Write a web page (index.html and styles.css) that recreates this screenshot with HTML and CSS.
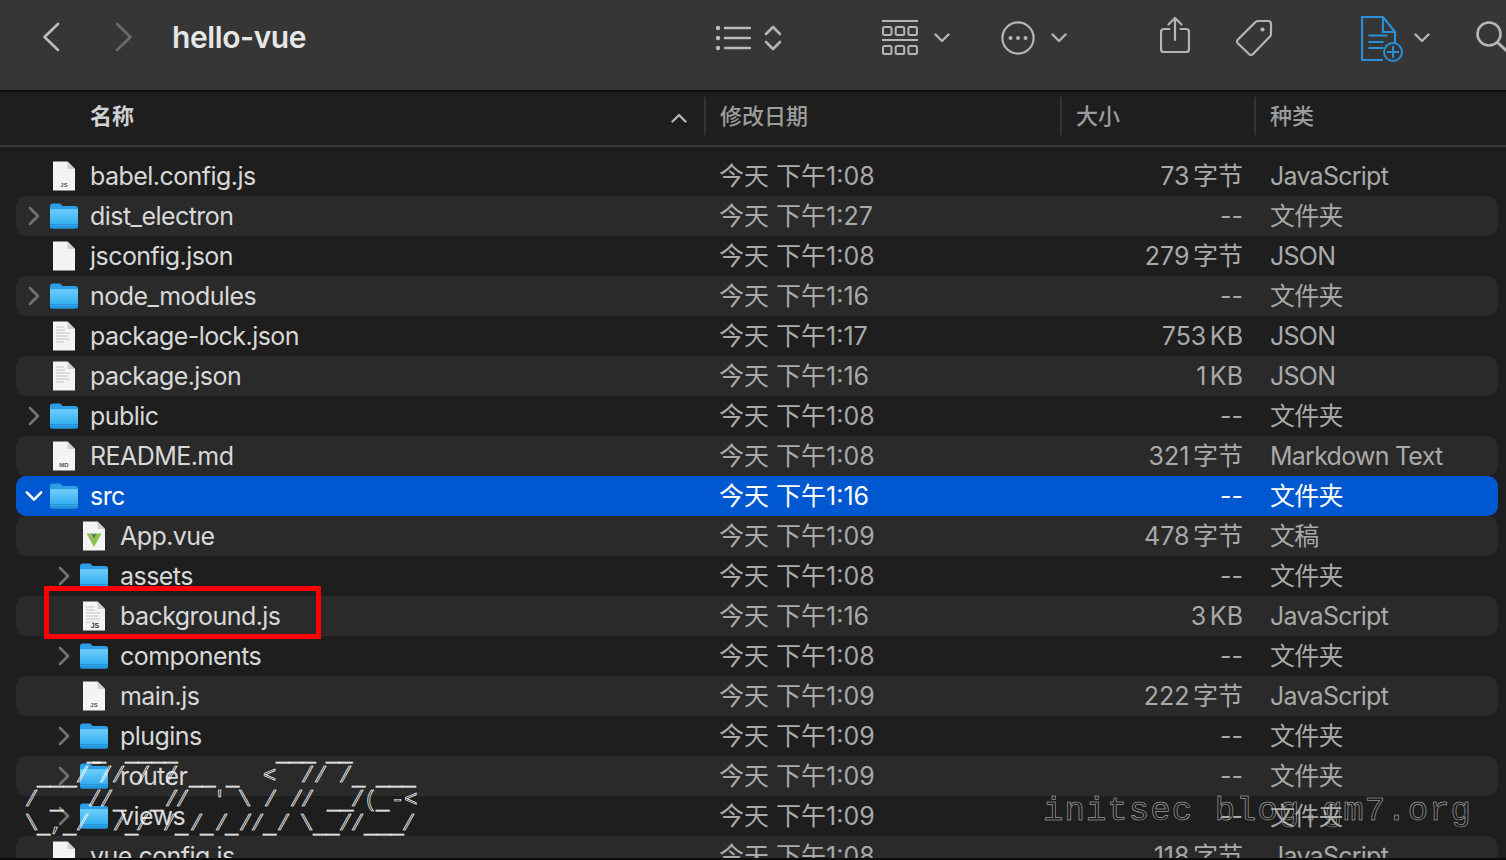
FILE: index.html
```html
<!DOCTYPE html>
<html lang="zh">
<head>
<meta charset="utf-8">
<title>hello-vue</title>
<link rel="stylesheet" href="styles.css">
</head>
<body>
<svg class="defs" width="0" height="0" aria-hidden="true">
  <defs>
    <linearGradient id="fg" x1="0" y1="0" x2="0" y2="1">
      <stop offset="0" stop-color="#6fd0fb"/>
      <stop offset="0.75" stop-color="#35aef0"/>
      <stop offset="1" stop-color="#1f97de"/>
    </linearGradient>
    <symbol id="folder" viewBox="0 0 28 26">
      <path d="M0 3.2C0 1.4 1 .4 2.6.4h6.2c1.3 0 1.9.5 2.7 1.4l1 1.2h13c1.6 0 2.5.9 2.5 2.5V10H0z" fill="#2c9fe6"/>
      <path d="M0 6.2h28V23.6c0 1.4-.9 2.2-2.3 2.2H2.3C.9 25.800 0 25 0 23.600z" fill="url(#fg)"/>
      <path d="M0 21.500h28M0 23.800h28" stroke="#2389cf" stroke-width=".7" fill="none"/>
    </symbol>
    <symbol id="doc" viewBox="0 0 24 30">
      <path d="M1 .5h14.500L23 8v21.500H1z" fill="#f4f4f4"/>
      <path d="M15.500.5V8H23z" fill="#cfcfcf"/>
    </symbol>
    <symbol id="lines" viewBox="0 0 24 30">
      <path d="M4 6h8M4 9h9M4 12h14M4 15h12M4 18h14M4 21h8" stroke="#bdbdbd" stroke-width=".9" fill="none"/>
    </symbol>
    <symbol id="chev-d" viewBox="0 0 16 10">
      <path d="M1.500 1.500 8 8l6.500-6.500" fill="none" stroke="#b5b5b5" stroke-width="2.400" stroke-linecap="round" stroke-linejoin="round"/>
    </symbol>
    <symbol id="disc" viewBox="0 0 12 20">
      <path d="M2 2l8 8-8 8" fill="none" stroke="currentColor" stroke-width="2.600" stroke-linecap="round" stroke-linejoin="round"/>
    </symbol>
  </defs>
</svg>

<main class="window">
  <header class="toolbar">
    <svg class="i-back" width="18" height="30" viewBox="0 0 18 30"><path d="M16 2 2.500 15 16 28" fill="none" stroke="#bdbdbd" stroke-width="2.600" stroke-linecap="round" stroke-linejoin="round"/></svg>
    <svg class="i-fwd" width="18" height="30" viewBox="0 0 18 30"><path d="M2 2l13.500 13L2 28" fill="none" stroke="#6a6a6a" stroke-width="2.600" stroke-linecap="round" stroke-linejoin="round"/></svg>
    <h1 class="title">hello-vue</h1>
    <svg class="i-list" width="36" height="26" viewBox="0 0 36 26"><g fill="#bcbcbc"><circle cx="3" cy="3" r="2.200"/><circle cx="3" cy="13" r="2.200"/><circle cx="3" cy="23" r="2.200"/></g><path d="M10 3h25M10 13h25M10 23h25" stroke="#bcbcbc" stroke-width="2.400" stroke-linecap="round"/></svg>
    <svg class="i-updown" width="18" height="28" viewBox="0 0 18 28"><path d="M2 10l7-7 7 7M2 18l7 7 7-7" fill="none" stroke="#b5b5b5" stroke-width="2.600" stroke-linecap="round" stroke-linejoin="round"/></svg>
    <svg class="i-group" width="36" height="36" viewBox="0 0 36 36"><path d="M0 1h36M0 20h36" stroke="#b5b5b5" stroke-width="2.200"/><g fill="none" stroke="#b5b5b5" stroke-width="2"><rect x="1" y="7" width="8.500" height="8" rx="1.500"/><rect x="13.700" y="7" width="8.500" height="8" rx="1.500"/><rect x="26.400" y="7" width="8.500" height="8" rx="1.500"/><rect x="1" y="26" width="8.500" height="8" rx="1.500"/><rect x="13.700" y="26" width="8.500" height="8" rx="1.500"/><rect x="26.400" y="26" width="8.500" height="8" rx="1.500"/></g></svg>
    <svg class="i-c1" width="16" height="10"><use href="#chev-d"/></svg>
    <svg class="i-more" width="34" height="34" viewBox="0 0 34 34"><circle cx="17" cy="17" r="15.600" fill="none" stroke="#b5b5b5" stroke-width="2.200"/><g fill="#b5b5b5"><circle cx="9.500" cy="17" r="2"/><circle cx="17" cy="17" r="2"/><circle cx="24.500" cy="17" r="2"/></g></svg>
    <svg class="i-c2" width="16" height="10"><use href="#chev-d"/></svg>
    <svg class="i-share" width="30" height="38" viewBox="0 0 30 38"><path d="M9.500 13H4c-2 0-3 1-3 3v17c0 2 1 3 3 3h22c2 0 3-1 3-3V16c0-2-1-3-3-3h-5.500M15 24V2M8.500 8.500 15 2l6.500 6.500" fill="none" stroke="#b5b5b5" stroke-width="2.200" stroke-linecap="round" stroke-linejoin="round"/></svg>
    <svg class="i-tag" width="38" height="38" viewBox="0 0 38 38"><path d="M3 20.500 20.500 3c.8-.8 1.600-1 2.700-1H33c2 0 3 1 3 3v10c0 1-.3 1.800-1 2.500L18 35c-1.300 1.300-2.800 1.300-4 0L3 24.500c-1.300-1.300-1.300-2.700 0-4z" fill="none" stroke="#b5b5b5" stroke-width="2.200" stroke-linejoin="round"/><circle cx="27.500" cy="10.500" r="2.100" fill="#b5b5b5"/></svg>
    <svg class="i-new" width="44" height="46" viewBox="0 0 44 46"><path d="M22 44H1V1h21l12 15v14" fill="none" stroke="#2b90d9" stroke-width="2.200"/><path d="M22 1v15h12" fill="none" stroke="#2b90d9" stroke-width="2.200"/><path d="M7.500 19.500h19M7.500 26h15M7.500 32h15" stroke="#2b90d9" stroke-width="2.200"/><circle cx="32" cy="36" r="9" fill="#363636" stroke="#2b90d9" stroke-width="2"/><path d="M32 30v12M26 36h12" stroke="#2b90d9" stroke-width="2"/></svg>
    <svg class="i-c3" width="16" height="10"><use href="#chev-d"/></svg>
    <svg class="i-search" width="40" height="34" viewBox="0 0 40 34"><circle cx="13" cy="13" r="11.500" fill="none" stroke="#b5b5b5" stroke-width="2.600"/><path d="M21.500 21.500 34 33" stroke="#b5b5b5" stroke-width="3" stroke-linecap="round"/></svg>
  </header>

  <div class="head">
    <div class="hc hc-name"><span>名称</span><svg width="16" height="10"><use href="#chev-d"/></svg></div>
    <div class="hc hc-date">修改日期</div>
    <div class="hc hc-size">大小</div>
    <div class="hc hc-kind">种类</div>
  </div>

  <div class="list">
    <div class="row"><div class="name"><span class="disc"></span><span class="ficon"><svg width="24" height="30"><use href="#doc"/><text class="tag" x="12" y="26">JS</text></svg></span><span class="label">babel.config.js</span></div><div class="date">今天 下午1:08</div><div class="size">73 字节</div><div class="kind">JavaScript</div></div>
    <div class="row"><div class="name"><svg class="disc" width="12" height="20"><use href="#disc"/></svg><span class="ficon"><svg width="28" height="26"><use href="#folder"/></svg></span><span class="label">dist_electron</span></div><div class="date">今天 下午1:27</div><div class="size">--</div><div class="kind">文件夹</div></div>
    <div class="row"><div class="name"><span class="disc"></span><span class="ficon"><svg width="24" height="30"><use href="#doc"/></svg></span><span class="label">jsconfig.json</span></div><div class="date">今天 下午1:08</div><div class="size">279 字节</div><div class="kind">JSON</div></div>
    <div class="row"><div class="name"><svg class="disc" width="12" height="20"><use href="#disc"/></svg><span class="ficon"><svg width="28" height="26"><use href="#folder"/></svg></span><span class="label">node_modules</span></div><div class="date">今天 下午1:16</div><div class="size">--</div><div class="kind">文件夹</div></div>
    <div class="row"><div class="name"><span class="disc"></span><span class="ficon"><svg width="24" height="30"><use href="#doc"/><use href="#lines"/></svg></span><span class="label">package-lock.json</span></div><div class="date">今天 下午1:17</div><div class="size">753 KB</div><div class="kind">JSON</div></div>
    <div class="row"><div class="name"><span class="disc"></span><span class="ficon"><svg width="24" height="30"><use href="#doc"/><use href="#lines"/></svg></span><span class="label">package.json</span></div><div class="date">今天 下午1:16</div><div class="size">1 KB</div><div class="kind">JSON</div></div>
    <div class="row"><div class="name"><svg class="disc" width="12" height="20"><use href="#disc"/></svg><span class="ficon"><svg width="28" height="26"><use href="#folder"/></svg></span><span class="label">public</span></div><div class="date">今天 下午1:08</div><div class="size">--</div><div class="kind">文件夹</div></div>
    <div class="row"><div class="name"><span class="disc"></span><span class="ficon"><svg width="24" height="30"><use href="#doc"/><text class="tag" x="12" y="26">MD</text></svg></span><span class="label">README.md</span></div><div class="date">今天 下午1:08</div><div class="size">321 字节</div><div class="kind">Markdown Text</div></div>
    <div class="row sel"><div class="name"><svg class="disc open" width="18" height="12" viewBox="0 0 20 12"><path d="M2 2l8 8 8-8" fill="none" stroke="#fff" stroke-width="2.800" stroke-linecap="round" stroke-linejoin="round"/></svg><span class="ficon"><svg width="28" height="26"><use href="#folder"/></svg></span><span class="label">src</span></div><div class="date">今天 下午1:16</div><div class="size">--</div><div class="kind">文件夹</div></div>
    <div class="row sub"><div class="name"><span class="disc"></span><span class="ficon"><svg width="24" height="30"><use href="#doc"/><path d="M4.500 12.500h4.800l2.700 4.500 2.700-4.500h4.800L12 26z" fill="#8fc04f"/><path d="M9.300 12.500h2l.7 1.300.7-1.300h2L12 17.500z" fill="#4f7a4c"/></svg></span><span class="label">App.vue</span></div><div class="date">今天 下午1:09</div><div class="size">478 字节</div><div class="kind">文稿</div></div>
    <div class="row sub"><div class="name"><svg class="disc" width="12" height="20"><use href="#disc"/></svg><span class="ficon"><svg width="28" height="26"><use href="#folder"/></svg></span><span class="label">assets</span></div><div class="date">今天 下午1:08</div><div class="size">--</div><div class="kind">文件夹</div></div>
    <div class="row sub"><div class="name"><span class="disc"></span><span class="ficon"><svg width="24" height="30"><use href="#doc"/><use href="#lines"/><text class="tag dark" x="13" y="26.500">JS</text></svg></span><span class="label">background.js</span></div><div class="date">今天 下午1:16</div><div class="size">3 KB</div><div class="kind">JavaScript</div></div>
    <div class="row sub"><div class="name"><svg class="disc" width="12" height="20"><use href="#disc"/></svg><span class="ficon"><svg width="28" height="26"><use href="#folder"/></svg></span><span class="label">components</span></div><div class="date">今天 下午1:08</div><div class="size">--</div><div class="kind">文件夹</div></div>
    <div class="row sub"><div class="name"><span class="disc"></span><span class="ficon"><svg width="24" height="30"><use href="#doc"/><text class="tag" x="12" y="26">JS</text></svg></span><span class="label">main.js</span></div><div class="date">今天 下午1:09</div><div class="size">222 字节</div><div class="kind">JavaScript</div></div>
    <div class="row sub"><div class="name"><svg class="disc" width="12" height="20"><use href="#disc"/></svg><span class="ficon"><svg width="28" height="26"><use href="#folder"/></svg></span><span class="label">plugins</span></div><div class="date">今天 下午1:09</div><div class="size">--</div><div class="kind">文件夹</div></div>
    <div class="row sub"><div class="name"><svg class="disc" width="12" height="20"><use href="#disc"/></svg><span class="ficon"><svg width="28" height="26"><use href="#folder"/></svg></span><span class="label">router</span></div><div class="date">今天 下午1:09</div><div class="size">--</div><div class="kind">文件夹</div></div>
    <div class="row sub"><div class="name"><svg class="disc" width="12" height="20"><use href="#disc"/></svg><span class="ficon"><svg width="28" height="26"><use href="#folder"/></svg></span><span class="label">views</span></div><div class="date">今天 下午1:09</div><div class="size">--</div><div class="kind">文件夹</div></div>
    <div class="row"><div class="name"><span class="disc"></span><span class="ficon"><svg width="24" height="30"><use href="#doc"/><text class="tag" x="12" y="26">JS</text></svg></span><span class="label">vue.config.js</span></div><div class="date">今天 下午1:08</div><div class="size">118 字节</div><div class="kind">JavaScript</div></div>
  </div>
  <div class="foot"></div>
</main>

<div class="redbox"></div>

<svg class="ascii" width="440" height="120" viewBox="0 0 440 120">
  <text x="87" y="21" textLength="19">__</text><text x="125" y="21">____</text><text x="276" y="21">___</text><text x="326" y="21">__</text>
  <text x="76" y="42">/</text><text x="99" y="42">/</text><text x="112" y="42">/</text><text x="137" y="42">/</text><text x="165" y="42">/</text><text x="263" y="42">&lt;</text><text x="301" y="42">/</text><text x="314" y="42">/</text><text x="339" y="42">/</text>
  <text x="37" y="45">___</text><text x="189" y="45">__</text><text x="226" y="45">_</text><text x="352" y="45">_</text><text x="376" y="45">___</text>
  <text x="25" y="66">/</text><text x="88" y="66">/</text><text x="100" y="66">/</text><text x="165" y="66">/</text><text x="176" y="66">/</text><text x="213" y="66">'</text><text x="238" y="66">\</text><text x="264" y="66">/</text><text x="290" y="66">/</text><text x="301" y="66">/</text><text x="351" y="66">/</text><text x="364" y="66">(</text><text x="391" y="66">-&lt;</text>
  <text x="50" y="69">_</text><text x="113" y="69">_</text><text x="150" y="69">_</text><text x="327" y="69">__</text><text x="376" y="69">_</text>
  <text x="25" y="90">\</text><text x="50" y="90">,</text><text x="76" y="90">/</text><text x="113" y="90">/</text><text x="136" y="90">/</text><text x="163" y="90">/</text><text x="190" y="90">/</text><text x="215" y="90">/</text><text x="239" y="90">/</text><text x="251" y="90">/</text><text x="277" y="90">/</text><text x="300" y="90">\</text><text x="339" y="90">/</text><text x="351" y="90">/</text><text x="402" y="90">/</text>
  <text x="37" y="93">_</text><text x="63" y="93">_</text><text x="125" y="93">_</text><text x="175" y="93">_</text><text x="200" y="93">_</text><text x="225" y="93">_</text><text x="263" y="93">_</text><text x="313" y="93">__</text><text x="364" y="93">___</text>
</svg>
<div class="wm">initsec blog.gm7.org</div>
</body>
</html>
```
FILE: styles.css
```css
* { box-sizing: border-box; }
html, body { margin: 0; padding: 0; height: 860px; overflow: hidden; background: #1e1e1e; }
body { position: relative; font-family: Inter, "Noto Sans CJK SC", sans-serif; }
.defs { position: absolute; }

.window { width: 1506px; height: 860px; display: flex; flex-direction: column; overflow: hidden; }

.toolbar { flex: none; height: 92px; background: #363636; border-bottom: 2px solid #0c0c0c; display: flex; align-items: flex-start; overflow: hidden; }
.toolbar svg { flex: none; }
.i-back { margin: 22px 0 0 42px; }
.i-fwd { margin: 22px 0 0 55px; }
.title { margin: 17px 0 0 39px; width: 543px; flex: none; font-size: 30px; line-height: 40px; font-weight: 600; color: #e6e6e6; letter-spacing: -.4px; }
.i-list { margin: 25px 0 0 0; }
.i-updown { margin: 24px 0 0 13px; }
.i-group { margin: 20px 0 0 100px; }
.i-c1 { margin: 33px 0 0 16px; }
.i-more { margin: 21px 0 0 51px; }
.i-c2 { margin: 33px 0 0 16px; }
.i-share { margin: 16px 0 0 93px; }
.i-tag { margin: 19px 0 0 45px; }
.i-new { margin: 16px 0 0 88px; }
.i-c3 { margin: 33px 0 0 9px; }
.i-search { margin: 21px 0 0 46px; }

.head { flex: none; height: 55px; background: #1e1e1e; border-bottom: 2px solid #3a3a3a; display: grid; grid-template-columns: 704px 356px 194px 1fr; align-items: center; font-size: 22px; color: #9c9c9c; font-weight: 500; padding-bottom: 6px; }
.hc { height: 38px; line-height: 38px; display: flex; align-items: center; padding-left: 14px; border-left: 2px solid #333; }
.hc-name { border-left: 0; padding: 0 17px 0 90px; justify-content: space-between; color: #d0d0d0; font-weight: 700; }
.hc-name svg { transform: rotate(180deg); margin-top: 4px; }

.list { flex: 1; min-height: 0; overflow: hidden; padding: 9px 8px 0 16px; }
.row { height: 40px; border-radius: 10px; display: grid; grid-template-columns: 689px 356px 194px 1fr; align-items: start; font-size: 25px; line-height: 40px; color: #a9a9a9; white-space: nowrap; }
.row:nth-child(even) { background: #2a2a2a; }
.row.sel { background: #0058d0; color: #fff; }
.name { display: flex; align-items: center; padding-left: 11px; color: #d8d8d8; height: 40px; }
.label { align-self: flex-start; letter-spacing: -.55px; }
.sel .name { color: #fff; }
.sub .name { padding-left: 41px; }
.disc { flex: none; display: block; width: 12px; height: 20px; margin-left: 1px; color: #737373; }
.disc.open { width: 18px; height: 12px; margin-left: -2px; margin-right: -3px; }
.ficon { flex: none; width: 28px; height: 30px; margin: 0 12px 0 10px; display: flex; align-items: center; justify-content: center; }
.tag { font-family: "Liberation Sans", sans-serif; font-size: 6px; font-weight: 700; text-anchor: middle; fill: #555; letter-spacing: 0; }
.tag.dark { font-size: 7px; fill: #333; }
.date { padding-left: 14px; }
.size { text-align: right; padding-right: 12px; word-spacing: -3.500px; }
.kind { padding-left: 15px; letter-spacing: -.75px; }
.foot { flex: none; height: 2px; background: #0c0c0c; }

.redbox { position: absolute; left: 44px; top: 586px; width: 277px; height: 53px; border: 5px solid #f00; }
.ascii { position: absolute; left: 0; top: 740px; font-family: "Liberation Mono", monospace; font-size: 22px; fill: none; stroke: #fff; stroke-width: .7; }
.wm { position: absolute; left: 1043px; top: 791px; font-family: "Liberation Mono", monospace; font-size: 34px; line-height: 40px; letter-spacing: 1.050px; color: transparent; -webkit-text-stroke: .5px #c8c8c8; white-space: pre; }
```
